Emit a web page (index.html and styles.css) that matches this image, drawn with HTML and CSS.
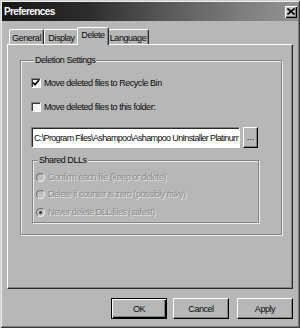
FILE: index.html
```html
<!DOCTYPE html>
<html>
<head>
<meta charset="utf-8">
<link rel="stylesheet" href="styles.css">
</head>
<body>
<div class="win">
  <div class="titlebar">
    <span class="title">Preferences</span>
    <span class="close"><svg width="8" height="7" viewBox="0 0 8 7"><path d="M0.5 0.5 L7.5 6.5 M7.5 0.5 L0.5 6.5" stroke="#000" stroke-width="1.6"/></svg></span>
  </div>
  <div class="client">
    <div class="tabs">
      <div class="tab t-general">General</div>
      <div class="tab t-display">Display</div>
      <div class="tab sel">Delete</div>
      <div class="tab t-lang">Language</div>
    </div>
    <div class="panel">
      <fieldset class="grp outer">
        <legend>Deletion Settings</legend>
        <div class="chk row1"><span class="box"><svg width="8" height="8" viewBox="0 0 8 8"><path d="M1 3.5 L3 5.8 L7 1" fill="none" stroke="#000" stroke-width="1.6"/></svg></span>Move deleted files to Recycle Bin</div>
        <div class="chk row2"><span class="box"></span>Move deleted files to this folder:</div>
        <div class="pathrow">
          <div class="input">C:\Program Files\Ashampoo\Ashampoo UnInstaller Platinum</div>
          <div class="btn browse">...</div>
        </div>
        <fieldset class="grp inner">
          <legend>Shared DLLs</legend>
          <div class="radio r1"><span class="rb"></span>Confirm each file (keep or delete)</div>
          <div class="radio r2"><span class="rb"></span>Delete if counter is zero (possibly risky)</div>
          <div class="radio r3"><span class="rb on"></span>Never delete DLL files (safest)</div>
        </fieldset>
      </fieldset>
    </div>
    <div class="buttons">
      <div class="btn def">OK</div>
      <div class="btn b-cancel">Cancel</div>
      <div class="btn b-apply">Apply</div>
    </div>
  </div>
</div>
</body>
</html>
```

FILE: styles.css
```css
* { box-sizing: border-box; }
body {
  margin: 0;
  font-family: "Liberation Sans", Arial, sans-serif;
  font-size: 9px;
  letter-spacing: -0.45px;
  color: #0a0a0a;
  background: #b7b7b7;
}
.win {
  width: 300px;
  height: 328px;
  padding: 2px;
  background: #b7b7b7;
  box-shadow: inset 1px 1px 0 #d0d0d0, inset -1px -1px 0 #3a3a3a, inset 2px 2px 0 #eeeeee, inset -2px -2px 0 #7a7a7a;
}
.titlebar {
  height: 19px;
  display: flex;
  align-items: center;
  justify-content: space-between;
  padding: 0 1px 0 2px;
  background: linear-gradient(90deg, #161616, #2e2e2e 30%, #585858 55%, #7c7c7c 80%, #939393);
}
.title {
  color: #fff;
  font-weight: bold;
  font-size: 10px;
  letter-spacing: -0.6px;
}
.close {
  width: 12px;
  height: 12px;
  background: #c4c4c4;
  box-shadow: inset 1px 1px 0 #fff, inset -1px -1px 0 #000, inset -2px -2px 0 #808080;
  display: flex;
  align-items: center;
  justify-content: center;
}
.client {
  padding: 6px 5px 0 5px;
}
.tabs {
  display: flex;
  align-items: flex-end;
  height: 17px;
  padding-left: 2px;
}
.tab {
  height: 15px;
  border: 1px solid;
  border-color: #fff #2a2a2a transparent #fff;
  border-bottom: none;
  border-radius: 2px 2px 0 0;
  display: flex;
  align-items: center;
  justify-content: center;
  padding-top: 1px;
  box-shadow: inset -1px 0 0 #858585;
  white-space: nowrap;
}
.t-general { width: 35px; }
.t-display { width: 35px; }
.t-lang { width: 42px; }
.tab.sel {
  width: 32px;
  height: 18px;
  margin: 0 -2px -1px -2px;
  position: relative;
  z-index: 1;
  background: #b7b7b7;
  padding-top: 0;
  padding-bottom: 3px;
}
.panel {
  height: 245px;
  border: 1px solid;
  border-color: #fff #2a2a2a #2a2a2a #fff;
  box-shadow: inset -1px -1px 0 #858585;
  padding: 10px 0 0 12px;
}
fieldset.grp {
  margin: 0;
  min-inline-size: 0;
  border: 1px solid #858585;
  box-shadow: 1px 1px 0 #ececec, inset 1px 1px 0 #ececec;
}
legend {
  padding: 0 1px;
  line-height: 10px;
  background: #b7b7b7;
}
.outer {
  width: 262px;
  height: 180px;
  padding: 0 0 0 10px;
}
.outer > legend { margin-left: 3px; }
.chk {
  display: flex;
  align-items: center;
  gap: 3px;
  height: 12px;
}
.row1 { margin-top: 12px; }
.row2 { margin-top: 12px; }
.box {
  width: 10px;
  height: 10px;
  background: #f4f4f4;
  border: 1px solid;
  border-color: #808080 #fff #fff #808080;
  box-shadow: inset 1px 1px 0 #3a3a3a;
  display: flex;
  align-items: center;
  justify-content: center;
}
.pathrow {
  display: flex;
  gap: 3px;
  margin-top: 14px;
}
.input {
  width: 209px;
  height: 21px;
  background: #fff;
  border: 1px solid;
  border-color: #808080 #fff #fff #808080;
  box-shadow: inset 1px 1px 0 #2a2a2a;
  padding-left: 2px;
  white-space: nowrap;
  overflow: hidden;
  display: flex;
  align-items: center;
  letter-spacing: -0.65px;
}
.btn {
  height: 21px;
  width: 56px;
  display: flex;
  align-items: center;
  justify-content: center;
  background: #b7b7b7;
  border: 1px solid;
  border-color: #fff #000 #000 #fff;
  box-shadow: inset -1px -1px 0 #808080;
}
.btn.browse {
  width: 15px;
  padding-bottom: 2px;
  letter-spacing: 0;
}
fieldset.inner {
  width: 227px;
  height: 68px;
  margin: 7px 0 0 1px;
  padding: 0 0 0 3px;
}
.inner > legend { margin-left: 2px; }
.radio {
  display: flex;
  align-items: center;
  gap: 3px;
  height: 12px;
  color: #8c8c8c;
  text-shadow: 1px 1px 0 #e8e8e8;
  white-space: nowrap;
}
.r1 { margin-top: 6px; }
.r2 { margin-top: 5px; }
.r3 { margin-top: 6px; }
.rb {
  width: 9px;
  height: 9px;
  flex: none;
  border-radius: 50%;
  border: 1px solid;
  border-color: #6a6a6a #f2f2f2 #f2f2f2 #6a6a6a;
  background: #c0c0c0;
  display: flex;
  align-items: center;
  justify-content: center;
}
.rb.on::after {
  content: "";
  width: 3px;
  height: 3px;
  border-radius: 50%;
  background: #333;
}
.buttons {
  display: flex;
  justify-content: flex-end;
  margin-top: 9px;
}
.btn.def {
  border: 1px solid #000;
  box-shadow: inset 1px 1px 0 #fff, inset -1px -1px 0 #000, inset -2px -2px 0 #808080;
}
.b-cancel { margin-left: 6px; }
.b-apply { margin-left: 8px; }
```
